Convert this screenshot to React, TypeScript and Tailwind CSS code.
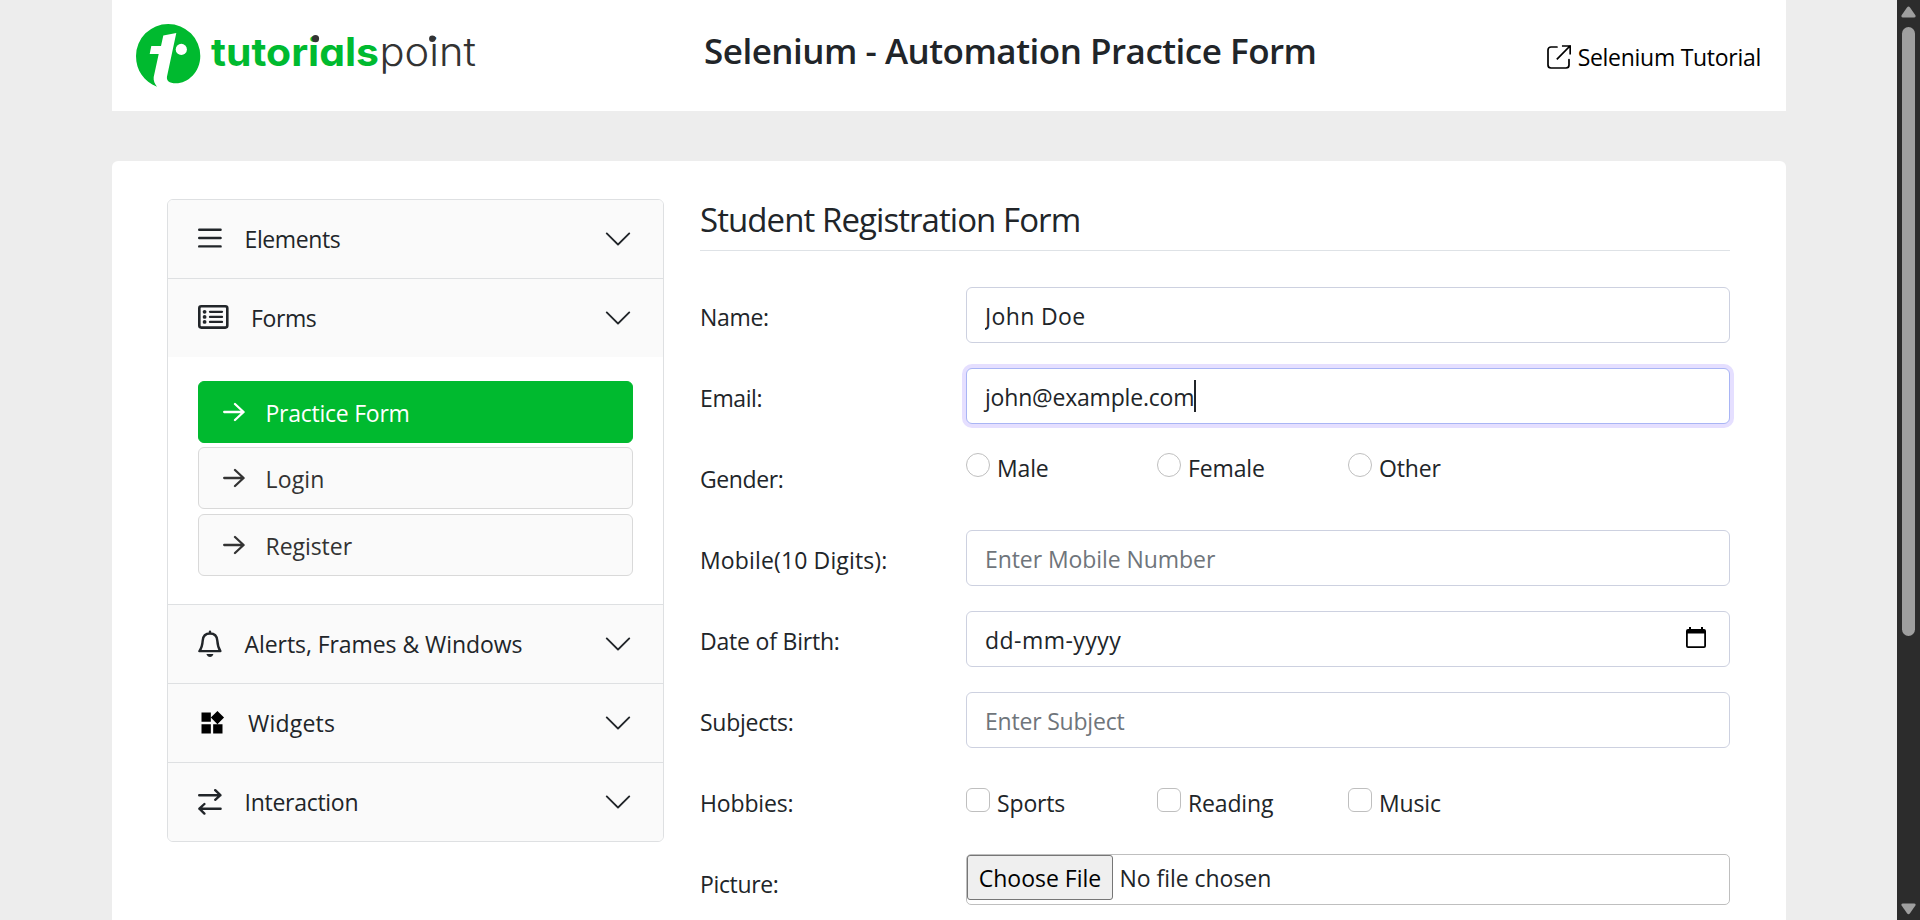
import type { ReactNode } from "react";

const stroke = {
  fill: "none",
  stroke: "currentColor",
  strokeLinecap: "round" as const,
  strokeLinejoin: "round" as const,
};

function Logo() {
  return (
    <svg width="350" height="68" viewBox="0 0 350 68" className="shrink-0">
      <path
        fill="#00ba2f"
        d="M21 64.7C8 59.5 0 48.5 0 34A32.15 32 0 0 1 64.3 34C64.3 50 52 61.3 40 61.3C33 61.3 30.3 58.8 31 54.5L40.3 11L27.3 13.5L25 24L15.3 24L13.7 32L22.7 32L17.7 55C17.2 58.5 18.8 62 21 64.7Z"
      />
      <circle cx="45.3" cy="27.4" r="5.6" fill="#fff" />
      <text
        x="75"
        y="43.7"
        textLength="168"
        lengthAdjust="spacingAndGlyphs"
        fill="#00ba2f"
        className="font-[Inter,sans-serif] text-[39px] font-bold [font-feature-settings:'cv11']"
      >
        tutorials
      </text>
      <text
        x="243.5"
        y="43.7"
        textLength="96.5"
        lengthAdjust="spacingAndGlyphs"
        fill="#333"
        className="font-[Inter,sans-serif] text-[39px] font-light [font-feature-settings:'cv11']"
      >
        point
      </text>
      <circle cx="179.5" cy="16.7" r="3.6" fill="#333" />
      <circle cx="296.3" cy="16.7" r="3.2" fill="#333" />
    </svg>
  );
}

function ExternalIcon() {
  return (
    <svg width="24" height="24" viewBox="0 0 24 24" strokeWidth="1.7" {...stroke}>
      <path d="M10 2H4A3 3 0 0 0 1 5V20A3 3 0 0 0 4 23H19A3 3 0 0 0 22 20V14.5" />
      <path strokeLinecap="square" strokeLinejoin="miter" d="M15.8 1H23.2V8.6M23 1L10.4 13.8" />
    </svg>
  );
}

function BarsIcon() {
  return (
    <svg width="24" height="30" viewBox="0 0 24 30" strokeWidth="2.4" {...stroke}>
      <path d="M1.2 5.7H22.6M1.2 14H22.6M1.2 22.4H22.6" />
    </svg>
  );
}

function ListCardIcon() {
  return (
    <svg width="31" height="30" viewBox="0 0 31 30" strokeWidth="2.6" {...stroke}>
      <rect x="1.3" y="3.2" width="28" height="21.4" rx="2" />
      <path d="M12 8.8H24M12 13.9H24M12 18.9H24" strokeWidth="2.3" />
      <g fill="currentColor" stroke="none">
        <circle cx="6.6" cy="8.8" r="1.9" />
        <circle cx="6.6" cy="13.9" r="1.9" />
        <circle cx="6.6" cy="18.9" r="1.9" />
      </g>
    </svg>
  );
}

function BellIcon() {
  return (
    <svg width="24" height="30" viewBox="0 0 24 30" strokeWidth="2.4" {...stroke}>
      <path d="M12 2.6V4.5M12 4.5C7.4 4.5 5 7.6 4.7 11.6C4.4 16 3.4 19.4 1.4 22.1H22.4C20.6 19.4 19.6 16 19.3 11.6C19 7.6 16.6 4.5 12 4.5Z" />
      <path fill="currentColor" stroke="none" d="M8.4 25H15.4C14.9 27 13.6 28 12 28S9 27 8.4 25Z" />
    </svg>
  );
}

function WidgetsIcon() {
  return (
    <svg width="28" height="28" viewBox="0 0 24 24" fill="#000">
      <path d="M13 13v8h8v-8h-8zM3 21h8v-8H3v8zM3 3v8h8V3H3zm13.66-1.31L11 7.34 16.66 13l5.66-5.66-5.66-5.65z" />
    </svg>
  );
}

function SwapIcon() {
  return (
    <svg width="24" height="30" viewBox="0 0 24 30" strokeWidth="2.4" {...stroke}>
      <path d="M1.2 8.2H22.4M17.2 3.2L22.4 8.2L17.2 12.8M22.6 21.7H1.4M6.4 17L1.4 21.7L6.4 26.6" />
    </svg>
  );
}

function ArrowIcon() {
  return (
    <svg width="22" height="20" viewBox="0 0 22 20" strokeWidth="2.3" {...stroke}>
      <path d="M1.2 10H20.4M12 2L20.6 10L12 18" />
    </svg>
  );
}

function Chevron() {
  return (
    <svg width="30" height="30" viewBox="0 0 16 16" fill="currentColor" className="ml-auto shrink-0">
      <path d="M1.646 4.646a.5.5 0 0 1 .708 0L8 10.293l5.646-5.647a.5.5 0 0 1 .708.708l-6 6a.5.5 0 0 1-.708 0l-6-6a.5.5 0 0 1 0-.708z" />
    </svg>
  );
}

function CalendarIcon() {
  return (
    <svg width="20" height="22" viewBox="0 0 20 22" className="shrink-0">
      <path
        fill="#000"
        fillRule="evenodd"
        d="M3 0H5V2H15V0H17V2H18A2 2 0 0 1 20 4V19A2 2 0 0 1 18 21H2A2 2 0 0 1 0 19V4A2 2 0 0 1 2 2H3ZM1.8 6.4V19.3H18.2V6.4Z"
      />
    </svg>
  );
}

function Section({
  icon,
  iconBox,
  title,
  tracking,
  flush,
}: {
  icon: ReactNode;
  iconBox: string;
  title: string;
  tracking: string;
  flush?: boolean;
}) {
  return (
    <div
      className={`flex items-center bg-[#fafafa] px-[30px] ${flush ? "h-[78px]" : "h-[79px] border-b border-[#dee0e2]"}`}
    >
      <span className={`flex shrink-0 items-center ${iconBox}`}>{icon}</span>
      <span className={`whitespace-nowrap ${tracking}`}>{title}</span>
      <Chevron />
    </div>
  );
}

function SubLink({ title, tracking, active }: { title: string; tracking: string; active?: boolean }) {
  return (
    <div
      className={`flex h-[62px] items-center rounded-[6px] border pl-[24px] ${
        active ? "border-[#00ba2f] bg-[#00ba2f] text-white" : "border-[#d9d9d9] bg-[#fafafa] text-[#333]"
      }`}
    >
      <ArrowIcon />
      <span className={`ml-[20.5px] pt-[2px] ${tracking}`}>{title}</span>
    </div>
  );
}

function Row({
  label,
  tracking,
  tall = true,
  children,
}: {
  label: string;
  tracking: string;
  tall?: boolean;
  children: ReactNode;
}) {
  return (
    <div className={`mb-[25px] grid grid-cols-[266px_764px] ${tall ? "h-[56px]" : "h-[51px]"}`}>
      <label className={`pt-[12px] whitespace-nowrap ${tracking}`}>{label}</label>
      {children}
    </div>
  );
}

const field =
  "flex h-[56px] w-full items-center rounded-[6px] border border-[#cdd1e0] bg-white pt-px pr-[23px] pl-[18px] outline-none placeholder:text-[#6f757b]";

function Choices({ names, square }: { names: string[]; square?: boolean }) {
  return (
    <div className="grid grid-cols-[191px_191px_191px]">
      {names.map((n) => (
        <div key={n} className={`flex items-start ${square ? "pt-[12px]" : "pt-px"}`}>
          <span
            className={`mt-[3px] size-[24px] shrink-0 border border-[#bfbfbf] bg-white ${square ? "rounded-[6px]" : "rounded-full"}`}
          />
          <span className="ml-[7px] tracking-[-0.15px]">{n}</span>
        </div>
      ))}
    </div>
  );
}

export default function App() {
  return (
    <div className="flex h-[920px] w-[1920px] overflow-hidden bg-[#ededed] font-['Open_Sans','Noto_Sans',sans-serif] text-[23px] leading-[36px] text-[#212529]">
      <div className="flex w-[1897px] flex-col pr-[111px] pl-[112px]">
        <header className="flex h-[111px] shrink-0 items-start bg-white pr-[25px] pl-[24px]">
          <div className="w-[568px] pt-[22px]">
            <Logo />
          </div>
          <h1 className="pt-[27px] text-[35px] leading-[48px] font-semibold tracking-[-0.5px] whitespace-nowrap">
            Selenium - Automation Practice Form
          </h1>
          <a className="mt-[39px] ml-auto flex items-center text-black">
            <ExternalIcon />
            <span className="ml-[7px] tracking-[-0.28px] whitespace-nowrap">Selenium Tutorial</span>
          </a>
        </header>

        <main className="mt-[50px] flex h-[800px] shrink-0 items-start rounded-t-[6px] bg-white pl-[55px]">
          <aside className="mt-[38px] w-[497px] overflow-hidden rounded-[6px] border border-[#dee0e2]">
            <Section icon={<BarsIcon />} iconBox="w-[46.5px]" title="Elements" tracking="tracking-[-0.4px]" />
            <Section icon={<ListCardIcon />} iconBox="w-[53px]" title="Forms" tracking="tracking-[-0.4px]" flush />
            <div className="flex h-[248px] flex-col border-b border-[#dee0e2] px-[30px] pt-[24px]">
              <SubLink title="Practice Form" tracking="tracking-[-0.25px]" active />
              <div className="mt-[4px] mb-[5px]">
                <SubLink title="Login" tracking="tracking-[0.15px]" />
              </div>
              <SubLink title="Register" tracking="tracking-[-0.05px]" />
            </div>
            <Section
              icon={<BellIcon />}
              iconBox="w-[46.5px]"
              title="Alerts, Frames & Windows"
              tracking="tracking-[-0.07px]"
            />
            <Section icon={<WidgetsIcon />} iconBox="w-[50px]" title="Widgets" tracking="tracking-[0.2px]" />
            <Section
              icon={<SwapIcon />}
              iconBox="w-[46.5px]"
              title="Interaction"
              tracking="tracking-[-0.28px]"
              flush
            />
          </aside>

          <section className="ml-[36px] w-[1030px] pt-[34px]">
            <h2 className="mb-[36px] border-b border-[#dee2e6] pb-[5px] text-[33px] leading-[50px] tracking-[-0.93px]">
              Student Registration Form
            </h2>
            <Row label="Name:" tracking="tracking-[-0.3px]">
              <input className={`${field} tracking-[0.35px]`} defaultValue="John Doe" />
            </Row>
            <Row label="Email:" tracking="tracking-[-0.4px]">
              <div className="flex h-[56px] items-center rounded-[6px] border border-[#a9b5f5] bg-white pl-[18px] shadow-[0_0_0_4px_#e5dfff]">
                <span className="pt-px tracking-[-0.2px]">john@example.com</span>
                <span className="h-[32px] w-[2px] bg-[#212529]" />
              </div>
            </Row>
            <Row label="Gender:" tracking="tracking-[-0.4px]">
              <Choices names={["Male", "Female", "Other"]} />
            </Row>
            <Row label="Mobile(10 Digits):" tracking="tracking-[0.14px]">
              <input className={`${field} tracking-[-0.07px]`} placeholder="Enter Mobile Number" />
            </Row>
            <Row label="Date of Birth:" tracking="tracking-[-0.2px]">
              <div className={field}>
                <span className="tracking-[0.45px]">dd-mm-yyyy</span>
                <span className="mb-[3px] ml-auto">
                  <CalendarIcon />
                </span>
              </div>
            </Row>
            <Row label="Subjects:" tracking="tracking-[-0.25px]">
              <input className={`${field} tracking-[-0.2px]`} placeholder="Enter Subject" />
            </Row>
            <Row label="Hobbies:" tracking="tracking-[-0.15px]">
              <Choices names={["Sports", "Reading", "Music"]} square />
            </Row>
            <Row label="Picture:" tracking="tracking-[-0.35px]" tall={false}>
              <div className="flex items-start rounded-[5px] border border-[#bfbfbf]">
                <span className="flex h-[45px] w-[146px] shrink-0 items-center justify-center rounded-[3px] border border-[#767676] bg-[#efefef] whitespace-nowrap text-black">
                  Choose File
                </span>
                <span className="ml-[6.5px] pt-[5px] tracking-[-0.04px]">No file chosen</span>
              </div>
            </Row>
          </section>
        </main>
      </div>

      <div className="flex w-[23px] shrink-0 flex-col items-center bg-[#2c2c2c] pt-[6px]">
        <svg width="15" height="12" viewBox="0 0 15 12" fill="#9f9f9f">
          <path d="M6 1.6Q7.5-.6 9 1.6L14.4 9.2Q15.2 11.4 13 11.4H2Q-.2 11.4.6 9.2Z" />
        </svg>
        <div className="mt-[9px] h-[609px] w-[13px] rounded-full bg-[#9f9f9f]" />
        <svg width="15" height="12" viewBox="0 0 15 12" fill="#9f9f9f" className="mt-[267px]">
          <path d="M6 10.2Q7.5 12.2 9 10.2L14.4 2.4Q15.2.4 13 .4H2Q-.2.4.6 2.4Z" />
        </svg>
      </div>
    </div>
  );
}
